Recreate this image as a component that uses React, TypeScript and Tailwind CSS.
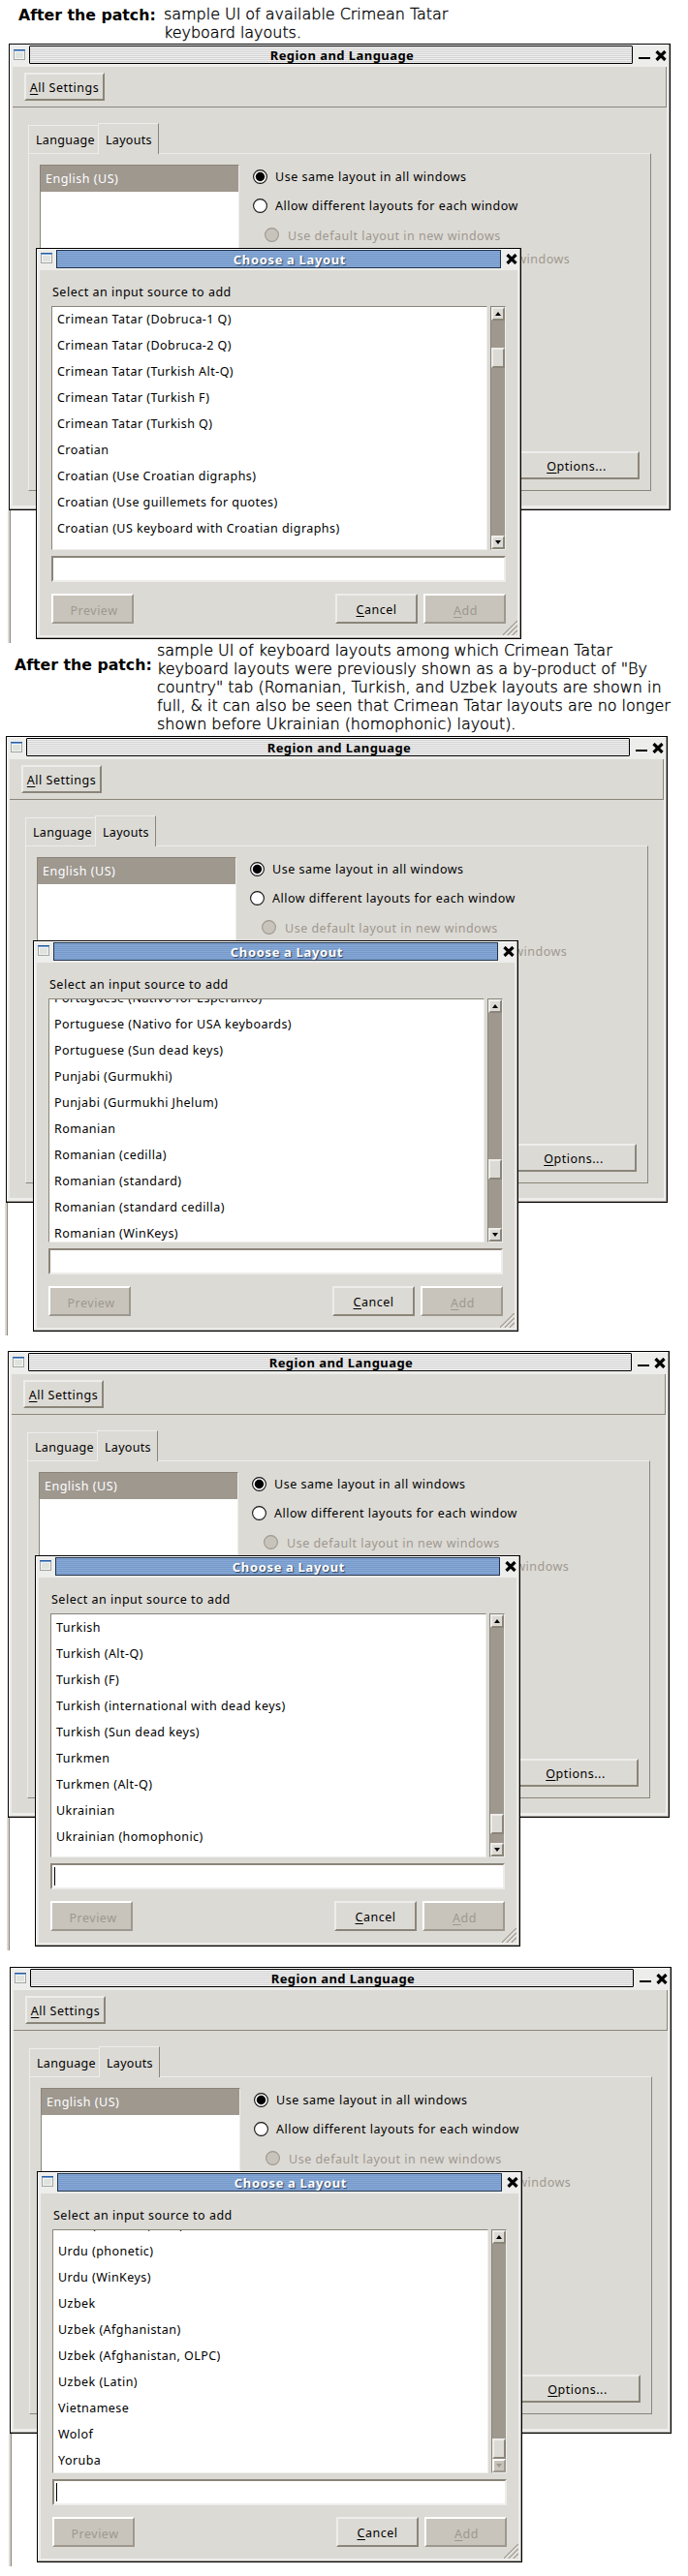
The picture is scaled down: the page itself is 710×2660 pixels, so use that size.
import type { ReactNode } from "react";

type Shot = {
  id: string;
  section: string;
  items: string[];
  listOffset: string;
  thumb: string;
  cursor?: boolean;
  atEnd?: boolean;
};

const shots: Shot[] = [
  {
    id: "crimean",
    section: "h-[615px] pl-[9px]",
    items: [
      "Crimean Tatar (Dobruca-1 Q)",
      "Crimean Tatar (Dobruca-2 Q)",
      "Crimean Tatar (Turkish Alt-Q)",
      "Crimean Tatar (Turkish F)",
      "Crimean Tatar (Turkish Q)",
      "Croatian",
      "Croatian (Use Croatian digraphs)",
      "Croatian (Use guillemets for quotes)",
      "Croatian (US keyboard with Croatian digraphs)",
    ],
    listOffset: "-mt-px",
    thumb: "mt-[28px]",
  },
  {
    id: "romanian",
    section: "h-[635px] pl-[6px]",
    items: [
      "Portuguese (Nativo for Esperanto)",
      "Portuguese (Nativo for USA keyboards)",
      "Portuguese (Sun dead keys)",
      "Punjabi (Gurmukhi)",
      "Punjabi (Gurmukhi Jhelum)",
      "Romanian",
      "Romanian (cedilla)",
      "Romanian (standard)",
      "Romanian (standard cedilla)",
      "Romanian (WinKeys)",
    ],
    listOffset: "-mt-[15px]",
    thumb: "mt-[151px]",
  },
  {
    id: "turkish",
    section: "h-[636px] pl-[8px]",
    items: [
      "Turkish",
      "Turkish (Alt-Q)",
      "Turkish (F)",
      "Turkish (international with dead keys)",
      "Turkish (Sun dead keys)",
      "Turkmen",
      "Turkmen (Alt-Q)",
      "Ukrainian",
      "Ukrainian (homophonic)",
    ],
    listOffset: "mt-0",
    thumb: "mt-[192px]",
    cursor: true,
  },
  {
    id: "uzbek",
    section: "h-[629px] pl-[10px]",
    items: [
      "Urdu (Pakistan, NLA)",
      "Urdu (phonetic)",
      "Urdu (WinKeys)",
      "Uzbek",
      "Uzbek (Afghanistan)",
      "Uzbek (Afghanistan, OLPC)",
      "Uzbek (Latin)",
      "Vietnamese",
      "Wolof",
      "Yoruba",
    ],
    listOffset: "-mt-[19px]",
    thumb: "mt-[201px]",
    cursor: true,
    atEnd: true,
  },
];

function WindowIcon() {
  return (
    <svg width="12" height="12" viewBox="0 0 12 12" className="shrink-0" shapeRendering="crispEdges">
      <rect width="12" height="11" fill="#a3a5a3" />
      <rect x="1" y="2" width="10" height="8" fill="#f4f5f3" />
      <rect x="2" y="3" width="8" height="6" fill="#dfe3de" />
      <rect width="12" height="1" fill="#2f5f9e" />
      <rect y="1" width="12" height="1" fill="#6d9bd4" />
    </svg>
  );
}

function CloseIcon() {
  return (
    <svg width="12" height="11" viewBox="0 0 12 11" className="shrink-0">
      <path d="M1.5 1 10.5 10M10.5 1 1.5 10" stroke="#000" strokeWidth="3.2" />
    </svg>
  );
}

function Radio({ checked, disabled }: { checked?: boolean; disabled?: boolean }) {
  return (
    <svg width="15" height="15" viewBox="0 0 15 15" className="shrink-0">
      <circle cx="7.5" cy="7.5" r="6.9" fill={disabled ? "#c8c4bc" : "#fff"} stroke={disabled ? "#9e988f" : "#111"} strokeWidth="1.1" />
      {checked && <circle cx="7.5" cy="7.5" r="4.7" fill="#000" />}
    </svg>
  );
}

function Button({ className, disabled, children }: { className: string; disabled?: boolean; children: ReactNode }) {
  const look = disabled
    ? "bg-[#c8c4bc] border-t-white border-l-white border-r-[#9e988f] border-b-[#9e988f] text-[#9e988f]"
    : "bg-[#dcdad5] border-t-[#eeedeb] border-l-[#eeedeb] border-r-[#8b8579] border-b-[#8b8579]";
  return <div className={`flex shrink-0 justify-center border-2 ${look} ${className}`}>{children}</div>;
}

function Key({ children }: { children: ReactNode }) {
  return <span className="underline decoration-1 underline-offset-2">{children}</span>;
}

function ScrollArrow({ down, disabled }: { down?: boolean; disabled?: boolean }) {
  const fill = disabled ? "#9e988f" : "#000";
  return (
    <Button className="h-[14px] w-[14px] items-center" disabled={disabled}>
      <svg width="6" height="4" viewBox="0 0 6 4">
        <path d={down ? "M0 0H6L3 4Z" : "M0 4H6L3 0Z"} fill={fill} />
      </svg>
    </Button>
  );
}

function LayoutDialog({ shot }: { shot: Shot }) {
  return (
    <div className="absolute left-[28px] top-[211px] h-[404px] w-[501px] border border-black bg-[#ededeb] shadow-[inset_-1px_-1px_0_#a39e97,inset_1px_1px_0_#ffffff]">
      <div className="flex h-[22px] items-start pl-1">
        <div className="pt-1"><WindowIcon /></div>
        <div className="ml-1 mt-px h-[19px] w-[459px] border border-[#20324c] bg-[repeating-linear-gradient(to_bottom,#86a9d8_0px,#86a9d8_1px,#7699c9_1px,#7699c9_2px)] pl-[23px] text-center font-['Noto_Sans'] text-[13px] font-bold leading-[18px] tracking-[0.65px] text-white [text-shadow:1px_1px_1px_#2b4466]">
          Choose a Layout
        </div>
        <div className="ml-[5px] mt-[5px]"><CloseIcon /></div>
      </div>
      <div className="mx-[3px] h-[377px] bg-[#dcdad5] pl-3">
        <div className="h-[37px] pl-px pt-[14px] leading-[18px]">Select an input source to add</div>
        <div className="flex h-[252px] gap-[3px]">
          <div className="w-[450px] overflow-hidden border border-b-[#eeedeb] border-l-[#8b8579] border-r-[#eeedeb] border-t-[#8b8579] bg-white pl-[5px] tracking-[0.45px]">
            <ul className={shot.listOffset}>
              {shot.items.map((item) => (
                <li key={item} className="h-[27px] whitespace-nowrap leading-[27px]">{item}</li>
              ))}
            </ul>
          </div>
          <div className="flex w-4 flex-col border border-b-[#eeedeb] border-l-[#8b8579] border-r-[#eeedeb] border-t-[#8b8579] bg-[#9e988f]">
            <ScrollArrow />
            <Button className={`h-[21px] w-[14px] ${shot.thumb}`}>{null}</Button>
            <div className="mt-auto"><ScrollArrow down disabled={shot.atEnd} /></div>
          </div>
        </div>
        <div className="mt-[6px] h-[27px] w-[469px] border-2 border-b-[#eeedeb] border-l-[#8b8579] border-r-[#eeedeb] border-t-[#8b8579] bg-white pl-[2px] pt-[2px]">
          {shot.cursor && <div className="h-[19px] w-px bg-black" />}
        </div>
        <div className="mt-3 flex w-[469px]">
          <Button className="h-[31px] w-[85px] pl-[3px] leading-[31px]" disabled>Preview</Button>
          <Button className="ml-auto mr-[6px] h-[31px] w-[85px] leading-[29px]"><span><Key>C</Key>ancel</span></Button>
          <Button className="h-[31px] w-[85px] pl-[2px] leading-[31px]" disabled><span><Key>A</Key>dd</span></Button>
        </div>
      </div>
      <svg width="15" height="15" viewBox="0 0 15 15" className="absolute bottom-[3px] right-[3px]">
        <path d="M0 15 15 0M5 15 15 5M10 15 15 10" stroke="#9e988f" strokeWidth="1.3" />
        <path d="M1.5 15 15 1.5M6.5 15 15 6.5M11.5 15 15 11.5" stroke="#f4f3f0" strokeWidth="1" />
      </svg>
    </div>
  );
}

function RegionWindow() {
  return (
    <div className="h-[482px] w-[683px] border border-black bg-[#ededeb] shadow-[inset_-1px_-1px_0_#a39e97,inset_1px_1px_0_#ffffff]">
      <div className="flex h-[23px] items-start pl-1">
        <div className="pt-[5px]"><WindowIcon /></div>
        <div className="ml-1 mt-px h-[19px] w-[623px] rounded-[1px] border border-black bg-[repeating-linear-gradient(to_bottom,#efefef_0px,#efefef_1px,#d4d4d4_1px,#d4d4d4_2px)] pl-[23px] text-center font-['Noto_Sans'] text-[13px] font-bold leading-[19px] tracking-[0.45px]">
          Region and Language
        </div>
        <div className="ml-[6px] mt-[13px] h-[2px] w-3 bg-black" />
        <div className="ml-[5px] mt-[6px]"><CloseIcon /></div>
      </div>
      <div className="mx-[3px] h-[453px] bg-[#dcdad5]">
        <div className="flex h-[42px] border-b border-r border-[#8b8579] pl-3 pt-[6px]">
          <Button className="h-[29px] w-[83px] leading-[27px]"><span className="whitespace-nowrap"><Key>A</Key>ll Settings</span></Button>
        </div>
        <div className="flex h-[47px] items-end pl-4 tracking-[0.3px]">
          <div className="h-[29px] w-[72px] border-l border-t border-[#eeedeb] pl-[7px] leading-[30px]">Language</div>
          <div className="relative z-10 -mb-px h-[32px] w-[63px] border-l border-r border-t border-l-[#eeedeb] border-r-[#8b8579] border-t-[#eeedeb] bg-[#dcdad5] pl-[7px] leading-[33px]">Layouts</div>
        </div>
        <div className="ml-4 flex h-[349px] w-[643px] border border-b-[#8b8579] border-l-[#eeedeb] border-r-[#8b8579] border-t-[#eeedeb]">
          <div className="ml-[11px] mt-[11px] h-[300px] w-[206px] border border-b-[#eeedeb] border-l-[#8b8579] border-r-[#eeedeb] border-t-[#8b8579] bg-white">
            <div className="h-[27px] bg-[#9e988f] pl-[5px] leading-[28px] text-white">English (US)</div>
          </div>
          <div className="ml-[14px] flex flex-1 flex-col whitespace-nowrap pt-2">
            <div className="flex h-[30px] items-center gap-2"><Radio checked />Use same layout in all windows</div>
            <div className="flex h-[30px] items-center gap-2"><Radio />Allow different layouts for each window</div>
            <div className="flex h-[30px] items-center gap-[9px] pl-3 text-[#9e988f]">
              <Radio disabled />
              <span className="pt-[2px]">Use default layout in new windows</span>
            </div>
            <div className="flex h-[20px] items-center gap-[9px] pl-3 text-[#9e988f]">
              <Radio disabled />
              <span className="pt-px">Use previous window's layout in new windows</span>
            </div>
            <Button className="mb-[11px] mr-[11px] mt-auto h-[29px] w-[130px] self-end leading-[27px]"><span><Key>O</Key>ptions...</span></Button>
          </div>
        </div>
      </div>
    </div>
  );
}

function Desktop({ shot }: { shot: Shot }) {
  return (
    <section className={`w-[710px] ${shot.section}`}>
      <div className="relative font-['Noto_Sans',sans-serif] text-[12.5px] tracking-[0.5px] text-black">
        <RegionWindow />
        {/* edge of the window lying behind */}
        <div className="-ml-px h-[137px] w-[3px] border-r border-[#8b8579] bg-[#dcdad5]" />
        <LayoutDialog shot={shot} />
      </div>
    </section>
  );
}

export default function App() {
  return (
    <main className="h-[2660px] w-[710px] overflow-hidden bg-white font-['DejaVu_Sans',sans-serif] text-[16px] leading-[19px] text-black">
      <header className="flex h-[45px] items-start pl-[19px] pt-[5px]">
        <b className="w-[150px] whitespace-nowrap pt-px text-[15.75px]">After the patch:</b>
        <p className="whitespace-nowrap font-extralight tracking-[-0.04px] [-webkit-text-stroke:0.35px_#000]">
          sample UI of available Crimean Tatar
          <br />
          keyboard layouts.
        </p>
      </header>
      <Desktop shot={shots[0]} />
      <header className="flex h-[100px] items-start pl-[15px] pt-[2px]">
        <b className="w-[147px] whitespace-nowrap pt-[15px] text-[15.75px]">After the patch:</b>
        <p className="whitespace-nowrap font-extralight tracking-[-0.04px] [-webkit-text-stroke:0.35px_#000]">
          sample UI of keyboard layouts among which Crimean Tatar
          <br />
          keyboard layouts were previously shown as a by-product of "By
          <br />
          country" tab (Romanian, Turkish, and Uzbek layouts are shown in
          <br />
          full, & it can also be seen that Crimean Tatar layouts are no longer
          <br />
          shown before Ukrainian (homophonic) layout).
        </p>
      </header>
      <Desktop shot={shots[1]} />
      <Desktop shot={shots[2]} />
      <Desktop shot={shots[3]} />
    </main>
  );
}
